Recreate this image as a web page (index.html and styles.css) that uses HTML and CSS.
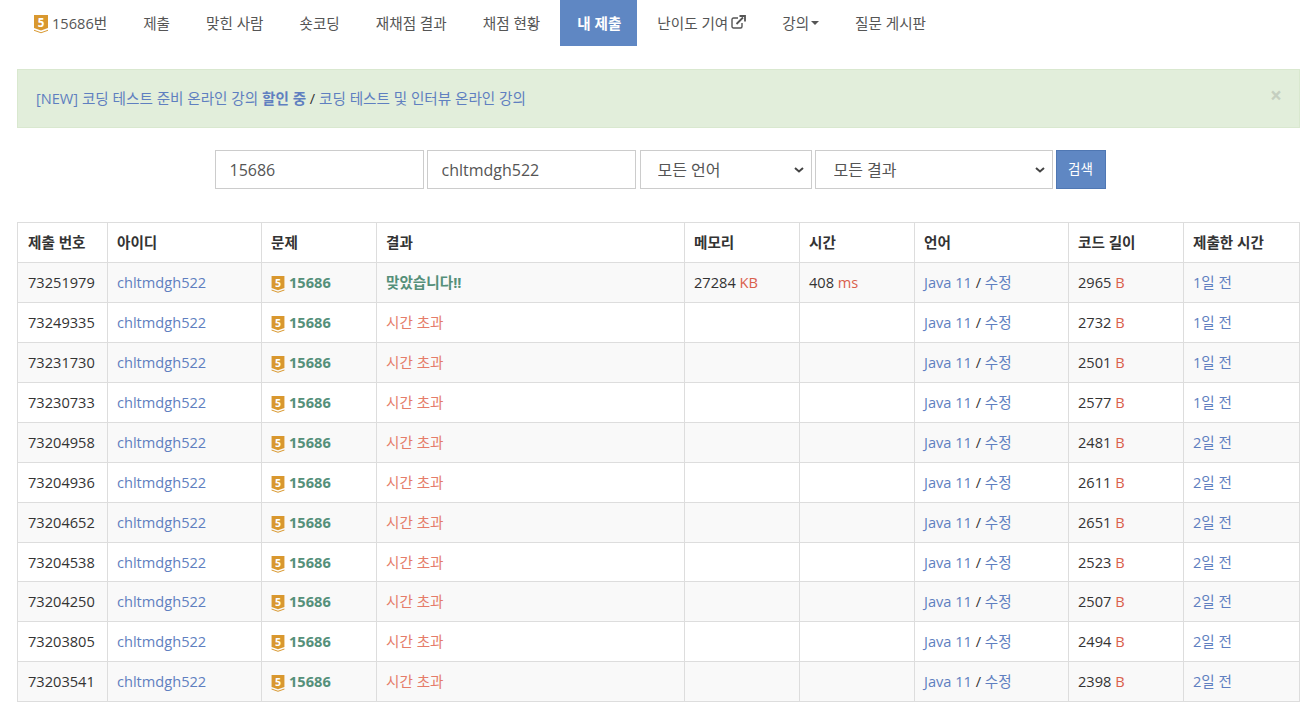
FILE: index.html
```html
<!DOCTYPE html>
<html lang="ko">
<head>
<meta charset="utf-8">
<title>채점 현황</title>
<link rel="stylesheet" href="styles.css">
</head>
<body>
<svg class="defs" width="0" height="0" aria-hidden="true"><defs>
<g id="tier"><path d="M0 0H14V13L7 15.500L0 13Z" fill="#d9982f"/><path d="M0 14.700L7 17.200L14 14.700V15.800L7 18.300L0 15.800Z" fill="#d9982f"/><text x="7" y="11.500" text-anchor="middle" class="tier-num">5</text></g>
</defs></svg>
<nav class="topnav">
<a class="nav-item nav-first" href="#"><svg class="tier" viewBox="0 0 14 18.500"><use href="#tier"/></svg>15686번</a>
<a class="nav-item" href="#">제출</a>
<a class="nav-item" href="#">맞힌 사람</a>
<a class="nav-item" href="#">숏코딩</a>
<a class="nav-item" href="#">재채점 결과</a>
<a class="nav-item before-active" href="#">채점 현황</a>
<a class="nav-item active" href="#">내 제출</a>
<a class="nav-item" href="#">난이도 기여<svg class="ext" viewBox="0 0 15 14"><path d="M11 8V11.500A1.500 1.500 0 0 1 9.500 13H2.500A1.500 1.500 0 0 1 1 11.500V4.500A1.500 1.500 0 0 1 2.500 3H7" fill="none" stroke="currentColor" stroke-width="1.400"/><path d="M5.500 9L12 2.500M8.500 1H14V6.500" fill="none" stroke="currentColor" stroke-width="1.800"/></svg></a>
<a class="nav-item" href="#">강의<span class="caret"></span></a>
<a class="nav-item" href="#">질문 게시판</a>
</nav>
<main class="page">
<div class="alert">
<p class="alert-text"><a href="#">[NEW] 코딩 테스트 준비 온라인 강의 <b>할인 중</b></a> / <a href="#">코딩 테스트 및 인터뷰 온라인 강의</a></p>
<span class="close">×</span>
</div>
<form class="search">
<input class="field w-id" value="15686">
<input class="field w-id" value="chltmdgh522">
<select class="field w-lang"><option>모든 언어</option></select>
<select class="field w-res"><option>모든 결과</option></select>
<button class="btn" type="button">검색</button>
</form>
<table class="status">
<colgroup><col class="c1"><col class="c2"><col class="c3"><col class="c4"><col class="c5"><col class="c6"><col class="c7"><col class="c8"><col class="c9"></colgroup>
<thead><tr><th>제출 번호</th><th>아이디</th><th>문제</th><th>결과</th><th>메모리</th><th>시간</th><th>언어</th><th>코드 길이</th><th>제출한 시간</th></tr></thead>
<tbody>
<tr><td>73251979</td><td><a href="#">chltmdgh522</a></td><td><a class="prob" href="#"><svg class="tier" viewBox="0 0 14 18.500"><use href="#tier"/></svg>15686</a></td><td class="ok">맞았습니다!!</td><td>27284 <i>KB</i></td><td>408 <i>ms</i></td><td><a href="#">Java 11</a> / <a href="#">수정</a></td><td>2965 <i>B</i></td><td><a href="#">1일 전</a></td></tr>
<tr><td>73249335</td><td><a href="#">chltmdgh522</a></td><td><a class="prob" href="#"><svg class="tier" viewBox="0 0 14 18.500"><use href="#tier"/></svg>15686</a></td><td class="tle">시간 초과</td><td></td><td></td><td><a href="#">Java 11</a> / <a href="#">수정</a></td><td>2732 <i>B</i></td><td><a href="#">1일 전</a></td></tr>
<tr><td>73231730</td><td><a href="#">chltmdgh522</a></td><td><a class="prob" href="#"><svg class="tier" viewBox="0 0 14 18.500"><use href="#tier"/></svg>15686</a></td><td class="tle">시간 초과</td><td></td><td></td><td><a href="#">Java 11</a> / <a href="#">수정</a></td><td>2501 <i>B</i></td><td><a href="#">1일 전</a></td></tr>
<tr><td>73230733</td><td><a href="#">chltmdgh522</a></td><td><a class="prob" href="#"><svg class="tier" viewBox="0 0 14 18.500"><use href="#tier"/></svg>15686</a></td><td class="tle">시간 초과</td><td></td><td></td><td><a href="#">Java 11</a> / <a href="#">수정</a></td><td>2577 <i>B</i></td><td><a href="#">1일 전</a></td></tr>
<tr><td>73204958</td><td><a href="#">chltmdgh522</a></td><td><a class="prob" href="#"><svg class="tier" viewBox="0 0 14 18.500"><use href="#tier"/></svg>15686</a></td><td class="tle">시간 초과</td><td></td><td></td><td><a href="#">Java 11</a> / <a href="#">수정</a></td><td>2481 <i>B</i></td><td><a href="#">2일 전</a></td></tr>
<tr><td>73204936</td><td><a href="#">chltmdgh522</a></td><td><a class="prob" href="#"><svg class="tier" viewBox="0 0 14 18.500"><use href="#tier"/></svg>15686</a></td><td class="tle">시간 초과</td><td></td><td></td><td><a href="#">Java 11</a> / <a href="#">수정</a></td><td>2611 <i>B</i></td><td><a href="#">2일 전</a></td></tr>
<tr><td>73204652</td><td><a href="#">chltmdgh522</a></td><td><a class="prob" href="#"><svg class="tier" viewBox="0 0 14 18.500"><use href="#tier"/></svg>15686</a></td><td class="tle">시간 초과</td><td></td><td></td><td><a href="#">Java 11</a> / <a href="#">수정</a></td><td>2651 <i>B</i></td><td><a href="#">2일 전</a></td></tr>
<tr><td>73204538</td><td><a href="#">chltmdgh522</a></td><td><a class="prob" href="#"><svg class="tier" viewBox="0 0 14 18.500"><use href="#tier"/></svg>15686</a></td><td class="tle">시간 초과</td><td></td><td></td><td><a href="#">Java 11</a> / <a href="#">수정</a></td><td>2523 <i>B</i></td><td><a href="#">2일 전</a></td></tr>
<tr><td>73204250</td><td><a href="#">chltmdgh522</a></td><td><a class="prob" href="#"><svg class="tier" viewBox="0 0 14 18.500"><use href="#tier"/></svg>15686</a></td><td class="tle">시간 초과</td><td></td><td></td><td><a href="#">Java 11</a> / <a href="#">수정</a></td><td>2507 <i>B</i></td><td><a href="#">2일 전</a></td></tr>
<tr><td>73203805</td><td><a href="#">chltmdgh522</a></td><td><a class="prob" href="#"><svg class="tier" viewBox="0 0 14 18.500"><use href="#tier"/></svg>15686</a></td><td class="tle">시간 초과</td><td></td><td></td><td><a href="#">Java 11</a> / <a href="#">수정</a></td><td>2494 <i>B</i></td><td><a href="#">2일 전</a></td></tr>
<tr><td>73203541</td><td><a href="#">chltmdgh522</a></td><td><a class="prob" href="#"><svg class="tier" viewBox="0 0 14 18.500"><use href="#tier"/></svg>15686</a></td><td class="tle">시간 초과</td><td></td><td></td><td><a href="#">Java 11</a> / <a href="#">수정</a></td><td>2398 <i>B</i></td><td><a href="#">2일 전</a></td></tr>
</tbody>
</table>
</main>
</body>
</html>
```
FILE: styles.css
```css
* { box-sizing: border-box; }
html, body { margin: 0; padding: 0; overflow: hidden; height: 708px; }
body {
  font-family: "Open Sans", "Noto Sans CJK KR", sans-serif;
  font-size: 14.6px;
  color: #333;
  background: #fff;
}
a { color: #5f7fc0; text-decoration: none; }
.defs { position: absolute; }
.tier-num { font: 700 11.5px "Open Sans", sans-serif; fill: #fff; }

.topnav { display: flex; height: 46px; padding-left: 17px; }
.nav-item {
  display: flex;
  align-items: center;
  padding: 0 17px 2px;
  margin-right: 2px;
  color: #555;
}
.before-active { margin-right: 3px; }
.nav-item.active { background: #5f87c3; color: #fff; font-weight: 700; padding-right: 16px; margin-right: 3px; }
.tier { width: 14px; height: 18.5px; margin-right: 4px; flex: none; }
.nav-first .tier { margin-top: 5px; }
.ext { width: 15px; height: 14px; margin-left: 3px; }
.caret {
  width: 0; height: 0; margin-left: 2px; margin-top: 2px;
  border-top: 4px solid #555;
  border-left: 4px solid transparent;
  border-right: 4px solid transparent;
}

.page { padding: 23px 3px 0 17px; }
.alert {
  display: flex;
  justify-content: space-between;
  height: 59px;
  padding: 0 17px 0 18px;
  background: #e2eedb;
  border: 1px solid #d9e8cf;
  color: #333;
}
.alert-text { margin: 0; line-height: 57px; }
.close { color: #c5cfc0; font-size: 21px; font-weight: 700; line-height: 50px; }

.search { display: flex; justify-content: center; gap: 3px; margin-top: 22px; padding-left: 3px; height: 39px; }
.field {
  height: 39px;
  border: 1px solid #ccc;
  border-radius: 0;
  background-color: #fff;
  padding: 0 14px 0 13px;
  font: 16px "Open Sans", "Noto Sans CJK KR", sans-serif;
  color: #555;
  outline: none;
}
input.field { padding-left: 14px; }
.w-id { width: 209px; }
.w-id + .w-id { margin-right: 1px; }
.w-lang { width: 172px; }
.w-res { width: 238px; }
select.field {
  appearance: none;
  padding-left: 17px;
  background-image: url("data:image/svg+xml,%3Csvg xmlns='http://www.w3.org/2000/svg' width='10' height='6'%3E%3Cpath d='M1 1l4 3.500l4-3.500' fill='none' stroke='%23444' stroke-width='2'/%3E%3C/svg%3E");
  background-repeat: no-repeat;
  background-position: right 7px center;
}
select.w-res { padding-left: 18px; }
.btn {
  width: 50px;
  height: 39px;
  background: #5f87c3;
  border: 1px solid #4f77b3;
  color: #fff;
  font: 13.500px "Open Sans", "Noto Sans CJK KR", sans-serif;
  padding: 0 0 3px;
}

.status { width: 1282px; margin-top: 33px; border-collapse: collapse; table-layout: fixed; border: 1px solid #ddd; }
.c1 { width: 90px; } .c2 { width: 154px; } .c3 { width: 115px; } .c4 { width: 308px; }
.c5 { width: 115px; } .c6 { width: 115px; } .c7 { width: 154px; } .c8 { width: 115px; } .c9 { width: 116px; }
.status th, .status td {
  border: 1px solid #ddd;
  padding: 0 9px 0.900px;
  height: 39.950px;
  line-height: 20px;
  text-align: left;
  vertical-align: middle;
  white-space: nowrap;
}
.status th:first-child, .status td:first-child { padding-left: 10px; }
.status th { font-weight: 700; color: #333; }
.status tbody tr:nth-child(odd) { background: #f9f9f9; }
.status i { font-style: normal; color: #d9604c; }
.prob { font-weight: 700; color: #55907a; }
.prob .tier { width: 14px; height: 17px; vertical-align: -3px; margin-bottom: -2px; }
.ok { font-weight: 700; color: #55907a; }
.tle { color: #e57c6a; }
```
